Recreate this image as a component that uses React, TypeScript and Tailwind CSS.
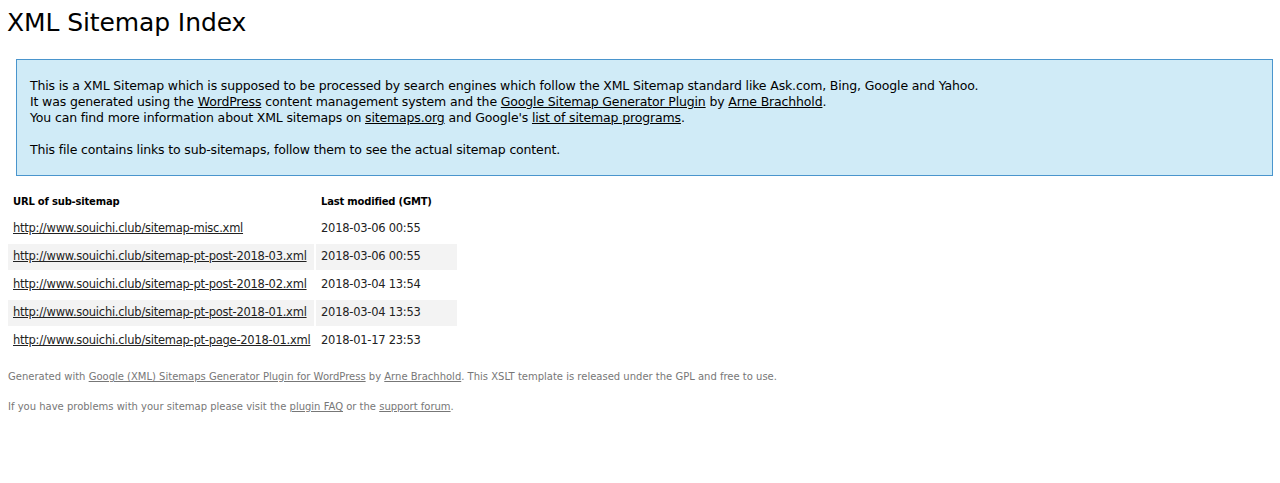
const rows = [
  ["http://www.souichi.club/sitemap-misc.xml", "2018-03-06 00:55"],
  ["http://www.souichi.club/sitemap-pt-post-2018-03.xml", "2018-03-06 00:55"],
  ["http://www.souichi.club/sitemap-pt-post-2018-02.xml", "2018-03-04 13:54"],
  ["http://www.souichi.club/sitemap-pt-post-2018-01.xml", "2018-03-04 13:53"],
  ["http://www.souichi.club/sitemap-pt-page-2018-01.xml", "2018-01-17 23:53"],
];

export default function App() {
  return (
    <div className="min-h-[483px] bg-white text-black font-['DejaVu_Sans',sans-serif]">
      <h1 className="pl-[7px] pt-[7px] text-[25px] leading-[31px] font-normal tracking-[-0.1px]">
        XML Sitemap Index
      </h1>

      <div className="ml-4 mr-[7px] mt-[21px] border border-[#4a95cd] bg-[#d0ebf7] px-[13px] pt-[18px] pb-[17px] text-[12.5px] leading-[16px] tracking-[-0.15px]">
        <p>
          This is a XML Sitemap which is supposed to be processed by search
          engines which follow the XML Sitemap standard like Ask.com, Bing,
          Google and Yahoo.
          <br />
          It was generated using the <a className="underline">WordPress</a>{" "}
          content management system and the{" "}
          <a className="underline">Google Sitemap Generator Plugin</a> by{" "}
          <a className="underline">Arne Brachhold</a>.
          <br />
          You can find more information about XML sitemaps on{" "}
          <a className="underline">sitemaps.org</a> and Google's{" "}
          <a className="underline">list of sitemap programs</a>.
        </p>
        <p className="mt-4">
          This file contains links to sub-sitemaps, follow them to see the
          actual sitemap content.
        </p>
      </div>

      <div className="ml-[8px] mt-[12px] flex flex-col gap-[2px] text-[11.5px] tracking-[-0.25px] whitespace-nowrap">
        <div className="flex gap-[2px] font-bold text-[10px] tracking-[-0.2px]">
          <div className="flex h-[26px] w-[306px] items-center px-[5px]">
            URL of sub-sitemap
          </div>
          <div className="flex h-[26px] w-[141px] items-center px-[5px]">
            Last modified (GMT)
          </div>
        </div>
        {rows.map(([url, date], i) => (
          <div key={url} className="flex gap-[2px]">
            <div
              className={`flex h-[26px] w-[306px] items-center px-[5px] ${
                i % 2 === 1 ? "bg-[#f3f3f3]" : ""
              }`}
            >
              <a className="underline text-[#222]">{url}</a>
            </div>
            <div
              className={`flex h-[26px] w-[141px] items-center px-[5px] text-[#222] ${
                i % 2 === 1 ? "bg-[#f3f3f3]" : ""
              }`}
            >
              {date}
            </div>
          </div>
        ))}
      </div>

      <div className="ml-[8px] mt-[16px] text-[10px] leading-[14px] text-[#777]">
        <p>
          Generated with{" "}
          <a className="underline">
            Google (XML) Sitemaps Generator Plugin for WordPress
          </a>{" "}
          by <a className="underline">Arne Brachhold</a>. This XSLT template is
          released under the GPL and free to use.
        </p>
        <p className="mt-4">
          If you have problems with your sitemap please visit the{" "}
          <a className="underline">plugin FAQ</a> or the{" "}
          <a className="underline">support forum</a>.
        </p>
      </div>
    </div>
  );
}
